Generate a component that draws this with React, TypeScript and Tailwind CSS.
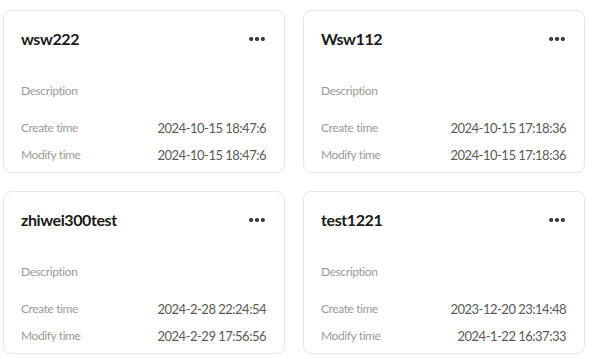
import { MoreHorizontal } from "lucide-react";

type Item = { name: string; created: string; modified: string };

const items: Item[] = [
  { name: "wsw222", created: "2024-10-15 18:47:6", modified: "2024-10-15 18:47:6" },
  { name: "Wsw112", created: "2024-10-15 17:18:36", modified: "2024-10-15 17:18:36" },
  { name: "zhiwei300test", created: "2024-2-28 22:24:54", modified: "2024-2-29 17:56:56" },
  { name: "test1221", created: "2023-12-20 23:14:48", modified: "2024-1-22 16:37:33" },
];

function Card({ item }: { item: Item }) {
  return (
    <div className="h-[163px] rounded-lg border border-[#e6e6e6] bg-white pl-[17px] pr-[18px] pt-[17px]">
      <div className="flex h-[22px] items-center justify-between">
        <span className="text-[16px] font-bold tracking-[-0.4px] text-[#1a1a1a]">{item.name}</span>
        <MoreHorizontal className="mr-[-1px] h-5 w-5 text-[#262626]" strokeWidth={3} />
      </div>
      <div className="mt-[31px] h-5 text-[12px] leading-5 tracking-[-0.4px] text-[#9a9a9a]">Description</div>
      <div className="mt-[17px] flex h-5 items-center justify-between leading-5">
        <span className="text-[12px] tracking-[-0.4px] text-[#9a9a9a]">Create time</span>
        <span className="text-[13px] tracking-[-0.5px] text-[#595959]">{item.created}</span>
      </div>
      <div className="mt-[7px] flex h-5 items-center justify-between leading-5">
        <span className="text-[12px] tracking-[-0.4px] text-[#9a9a9a]">Modify time</span>
        <span className="text-[13px] tracking-[-0.5px] text-[#595959]">{item.modified}</span>
      </div>
    </div>
  );
}

export default function App() {
  return (
    <div
      className="min-h-screen bg-white pl-[3px] pt-[10px] pr-[9px]"
      style={{ fontFamily: '"Lato", "Noto Sans", sans-serif' }}
    >
      <div className="grid grid-cols-2 gap-x-[18px] gap-y-[18px]">
        {items.map((item) => (
          <Card key={item.name} item={item} />
        ))}
      </div>
    </div>
  );
}
